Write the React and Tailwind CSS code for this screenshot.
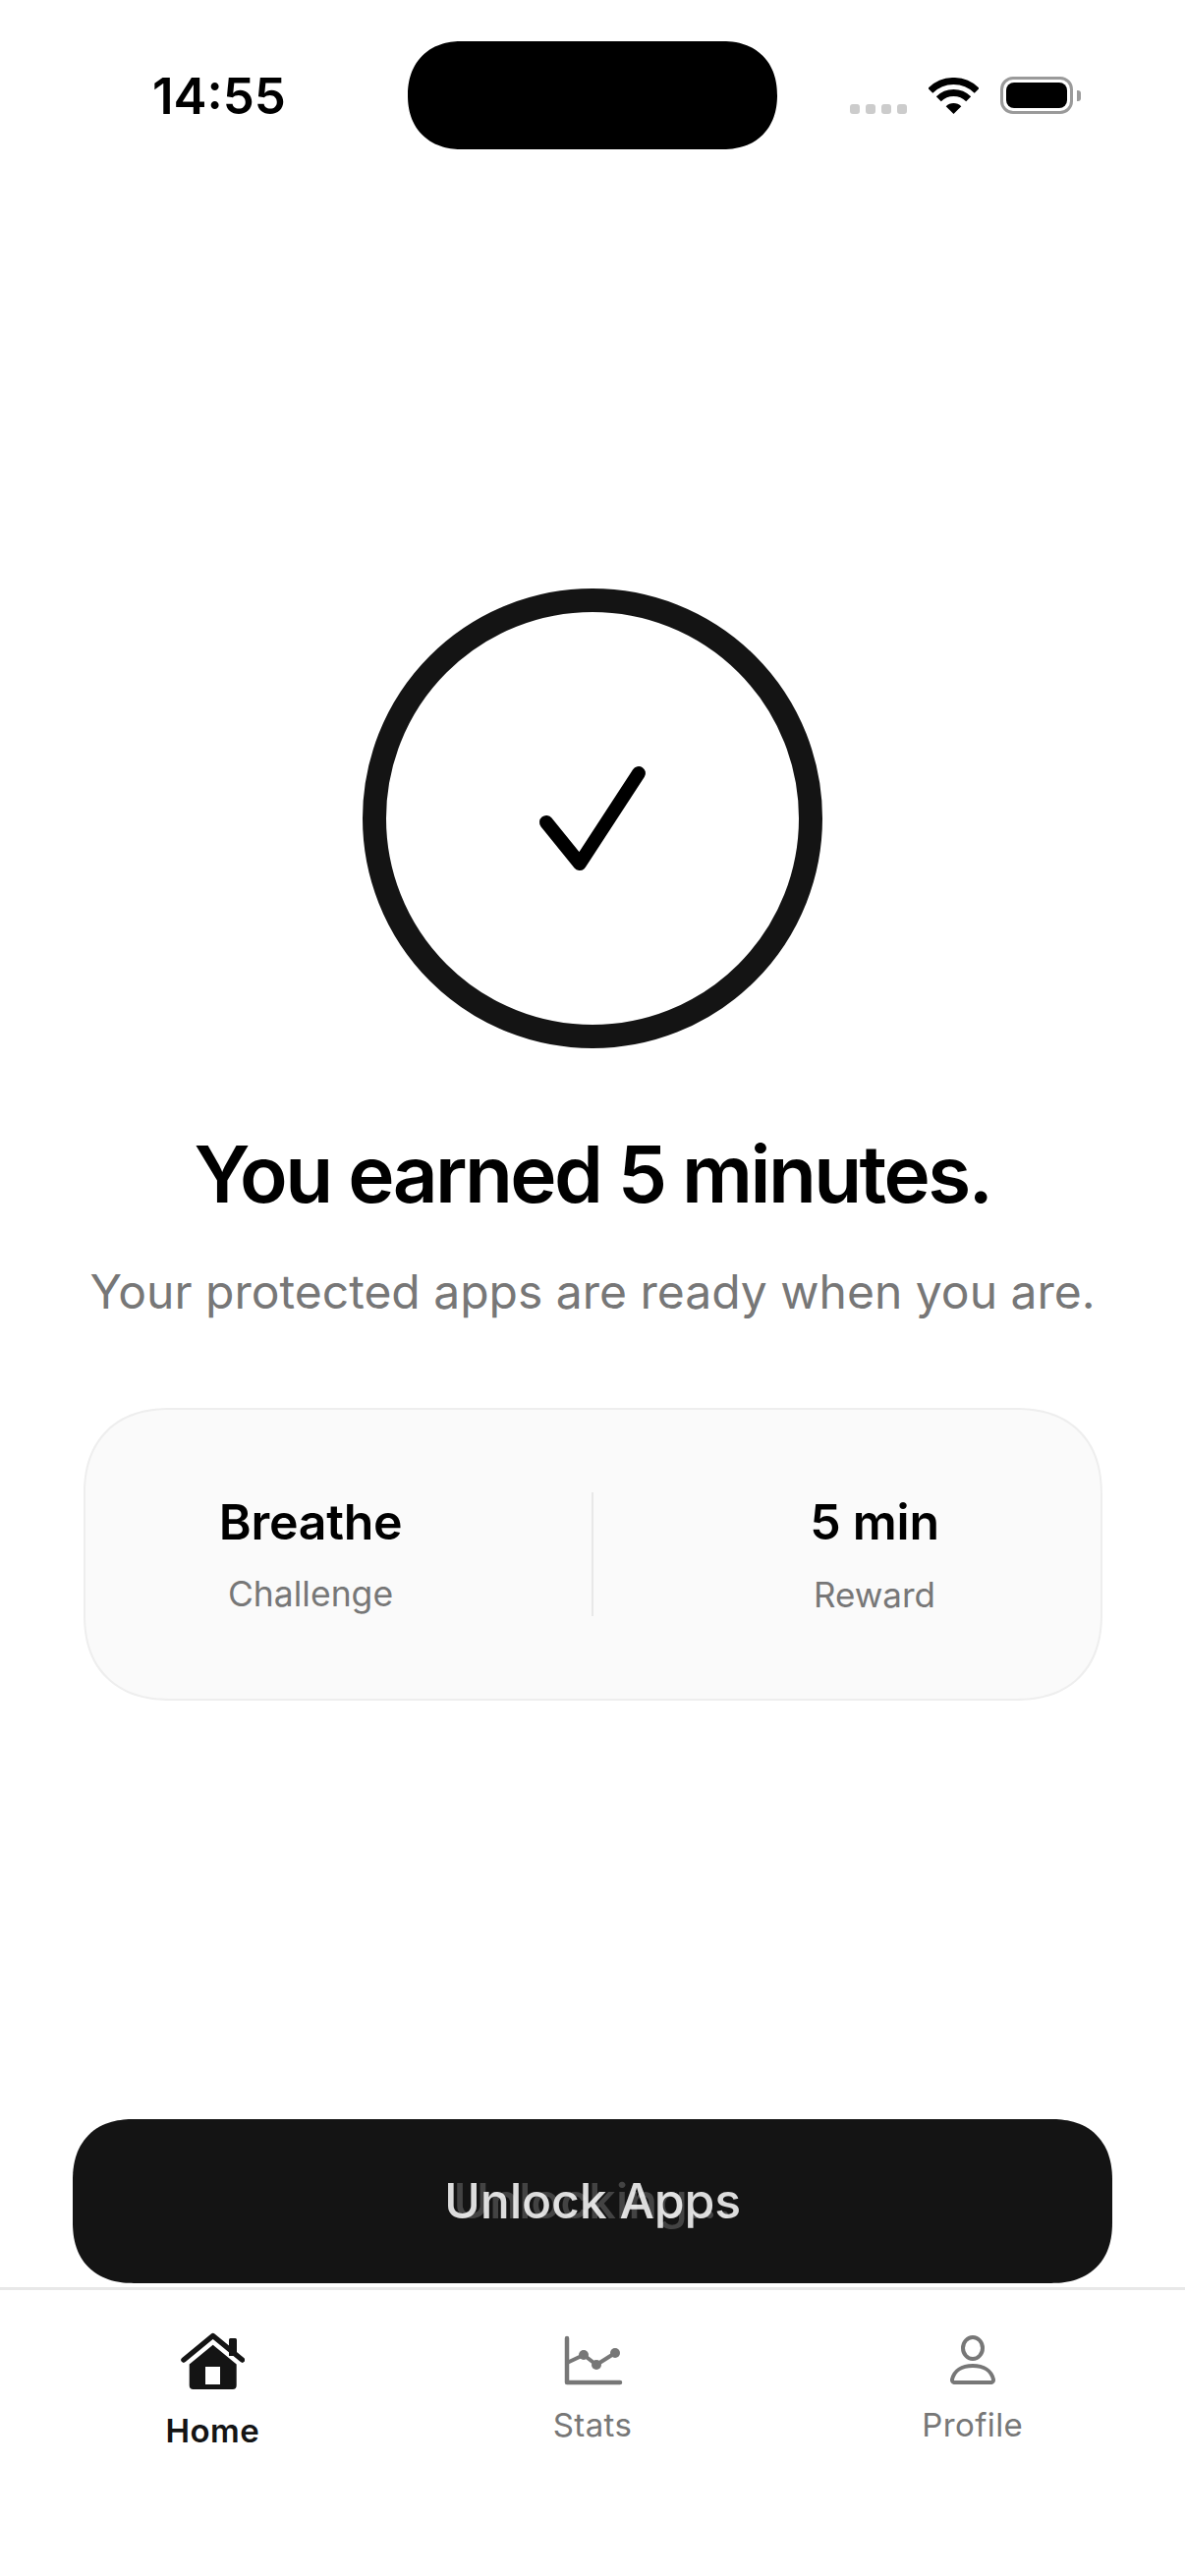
const HomeIcon = () => (
  <svg width="65" height="64" viewBox="0 0 65 64" fill="none">
    <path d="M49 11.5a1.5 1.5 0 0 1 1.5-1.5h5a1.5 1.5 0 0 1 1.5 1.5V28h-8z" fill="#141414" />
    <path
      fillRule="evenodd"
      d="M32.7 16.7 8.7 36.5V58a4 4 0 0 0 4 4h40a4 4 0 0 0 4-4V36.5zM25 39h15v18H25z"
      fill="#141414"
    />
    <path d="M3 32 32.7 7.5 62.5 32" stroke="#141414" strokeWidth="5.5" strokeLinecap="round" strokeLinejoin="round" />
  </svg>
);

const StatsIcon = () => (
  <svg width="64" height="64" viewBox="0 0 64 64" fill="none" stroke="#777777" strokeWidth="4" strokeLinecap="round" strokeLinejoin="round">
    <path d="M6 10v45h54" strokeWidth="4.5" />
    <path d="M6 35l17-8 13 10 19-12" />
    <circle cx="23" cy="27" r="5" fill="#777777" stroke="none" />
    <circle cx="36" cy="37" r="5" fill="#777777" stroke="none" />
    <circle cx="55" cy="25" r="5" fill="#777777" stroke="none" />
  </svg>
);

const ProfileIcon = () => (
  <svg width="64" height="64" viewBox="0 0 64 64" fill="none" stroke="#777777" strokeWidth="4" strokeLinejoin="round">
    <ellipse cx="32" cy="20" rx="10" ry="11" />
    <path d="M13 55h38a2.5 2.5 0 0 0 2-3C51 43 43 38 32 38S13 43 11 52a2.5 2.5 0 0 0 2 3z" />
  </svg>
);

const tabs = [
  { id: 'home', label: 'Home', icon: HomeIcon, labelClass: 'mt-[20px] font-semibold text-[#141414]' },
  { id: 'stats', label: 'Stats', icon: StatsIcon, labelClass: 'mt-[14px] text-[#777777]' },
  { id: 'profile', label: 'Profile', icon: ProfileIcon, labelClass: 'mt-[14px] text-[#777777]' },
];

const stats = [
  { value: 'Breathe', label: 'Challenge', pad: 'pr-[56px]' },
  { value: '5 min', label: 'Reward', pad: 'pl-[57px]' },
];

const StatusBar = () => (
  <div className="flex h-[152px] shrink-0">
    <div className="w-[415px] pl-[155px] pt-[68px] text-[51px] leading-[60px] font-semibold text-black">14:55</div>
    <div className="mt-[42px] h-[110px] w-[376px] rounded-[55px] bg-black [corner-shape:superellipse(1.15)]" />
    <div className="flex items-end pb-[36px] pl-[74px]">
      <div className="flex gap-[6px]">
        <div className="h-[10px] w-[10px] rounded-[3px] bg-[#cccccc]" />
        <div className="h-[10px] w-[10px] rounded-[3px] bg-[#cccccc]" />
        <div className="h-[10px] w-[10px] rounded-[3px] bg-[#cccccc]" />
        <div className="h-[10px] w-[10px] rounded-[3px] bg-[#cccccc]" />
      </div>
      <svg className="ml-[22px]" width="51" height="37" viewBox="0 0 51 37" fill="none">
        <path d="M1.8 13.3a33.5 33.5 0 0 1 47.4 0" stroke="#000" strokeWidth="7" />
        <path d="M10.3 21.8a21.5 21.5 0 0 1 30.4 0" stroke="#000" strokeWidth="7" />
        <path d="M25.5 37 17.7 29.2a11 11 0 0 1 15.6 0z" fill="#000" />
      </svg>
      <div className="ml-[22px] flex h-[38px] w-[74px] items-center justify-center rounded-[13px] border-[3px] border-[#9a9a9a]">
        <div className="h-[26px] w-[62px] rounded-[8px] bg-black" />
      </div>
      <div className="mb-[13px] ml-[4px] h-[11px] w-[4px] rounded-r-[3px] bg-[#9a9a9a]" />
    </div>
  </div>
);

const App = () => {
  return (
    <div className="flex h-[2622px] w-[1206px] flex-col overflow-hidden bg-white font-['Inter',sans-serif]">
      <StatusBar />

      <div className="mx-auto mt-[447px] flex h-[468px] w-[468px] items-center justify-center rounded-full border-[24px] border-[#141414]">
        <svg width="120" height="120" viewBox="0 0 120 120" fill="none">
          <path d="M13 64l34 42 60-92" stroke="#000" strokeWidth="14" strokeLinecap="round" strokeLinejoin="round" />
        </svg>
      </div>

      <h1 className="mt-[80px] text-center text-[80px] leading-[96px] font-semibold tracking-[-2.6px] text-black">
        You earned 5 minutes.
      </h1>
      <p className="mt-[43px] text-center text-[48px] leading-[58px] text-[#777777]">
        Your protected apps are ready when you are.
      </p>

      <div className="mx-[84.5px] mt-[89px] flex h-[298px] items-center rounded-[88px] border-2 border-[#eeeeee] bg-[#fafafa] [corner-shape:superellipse(1.2)]">
        <div className={`flex-1 text-center ${stats[0].pad}`}>
          <div className="text-[50px] leading-[60px] font-semibold tracking-[-0.25px] text-black">{stats[0].value}</div>
          <div className="mt-[22px] text-[35.5px] leading-[44px] text-[#777777]">{stats[0].label}</div>
        </div>
        <div className="h-[126px] w-[2px] bg-[#e8e8e8]" />
        <div className={`flex-1 text-center ${stats[1].pad}`}>
          <div className="text-[50px] leading-[60px] font-semibold tracking-[-0.25px] text-black">{stats[1].value}</div>
          <div className="mt-[22px] text-[35px] leading-[44px] text-[#777777]">{stats[1].label}</div>
        </div>
      </div>

      <div className="mt-auto px-[74px] pb-[4px]">
        <button className="relative flex h-[167px] w-full items-center justify-center rounded-[62px] bg-[#141414] text-[50px] font-medium tracking-[-0.2px] text-white [corner-shape:superellipse(1.2)]">
          <span className="absolute opacity-20">Unlocking...</span>
          <span className="opacity-85">Unlock Apps</span>
        </button>
      </div>

      <div className="flex h-[294px] shrink-0 border-t-[3px] border-[#e8e8e8] px-[23px] pt-[39px]">
        {tabs.map((tab) => (
          <div key={tab.id} className="flex flex-1 flex-col items-center">
            <tab.icon />
            <span className={`text-[33px] leading-[40px] tracking-[0.4px] ${tab.labelClass}`}>{tab.label}</span>
          </div>
        ))}
      </div>
    </div>
  );
};

export default App;
